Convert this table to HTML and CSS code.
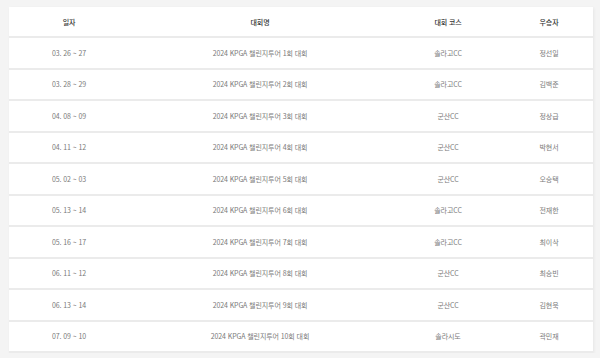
FILE: index.html
```html
<!DOCTYPE html>
<html lang="ko">
<head>
<meta charset="utf-8">
<link rel="stylesheet" href="styles.css">
</head>
<body>
<div class="card">
  <div class="row head">
    <div>일자</div><div>대회명</div><div>대회 코스</div><div>우승자</div>
  </div>
  <div class="row"><div>03. 26 ~ 27</div><div>2024 KPGA 챌린지투어 1회 대회</div><div>솔라고CC</div><div>정선일</div></div>
  <div class="row"><div>03. 28 ~ 29</div><div>2024 KPGA 챌린지투어 2회 대회</div><div>솔라고CC</div><div>김백준</div></div>
  <div class="row"><div>04. 08 ~ 09</div><div>2024 KPGA 챌린지투어 3회 대회</div><div>군산CC</div><div>정상급</div></div>
  <div class="row"><div>04. 11 ~ 12</div><div>2024 KPGA 챌린지투어 4회 대회</div><div>군산CC</div><div>박현서</div></div>
  <div class="row"><div>05. 02 ~ 03</div><div>2024 KPGA 챌린지투어 5회 대회</div><div>군산CC</div><div>오승택</div></div>
  <div class="row"><div>05. 13 ~ 14</div><div>2024 KPGA 챌린지투어 6회 대회</div><div>솔라고CC</div><div>전재한</div></div>
  <div class="row"><div>05. 16 ~ 17</div><div>2024 KPGA 챌린지투어 7회 대회</div><div>솔라고CC</div><div>최이삭</div></div>
  <div class="row"><div>06. 11 ~ 12</div><div>2024 KPGA 챌린지투어 8회 대회</div><div>군산CC</div><div>최승빈</div></div>
  <div class="row"><div>06. 13 ~ 14</div><div>2024 KPGA 챌린지투어 9회 대회</div><div>군산CC</div><div>김현욱</div></div>
  <div class="row"><div>07. 09 ~ 10</div><div>2024 KPGA 챌린지투어 10회 대회</div><div>솔라시도</div><div>곽민재</div></div>
</div>
</body>
</html>
```

FILE: styles.css
```css
html, body {
  margin: 0;
  padding: 0;
  background: #f4f4f4;
}
body {
  padding: 7px 7px 0 9px;
  font-family: "Noto Sans CJK KR", "Noto Sans", sans-serif;
}
.card {
  width: 584px;
  background: #fff;
  box-shadow: 1px 1px 3px rgba(0, 0, 0, 0.06);
}
.row {
  display: grid;
  grid-template-columns: 120px 262px 114px 88px;
  height: 31.5px;
  box-sizing: border-box;
  border-bottom: 2px solid #ebebeb;
  align-items: center;
  text-align: center;
  font-size: 7px;
  color: #7a7a7a;
  letter-spacing: -0.1px;
}
.row.head {
  height: 31px;
  color: #333;
  font-weight: 500;
}
```
